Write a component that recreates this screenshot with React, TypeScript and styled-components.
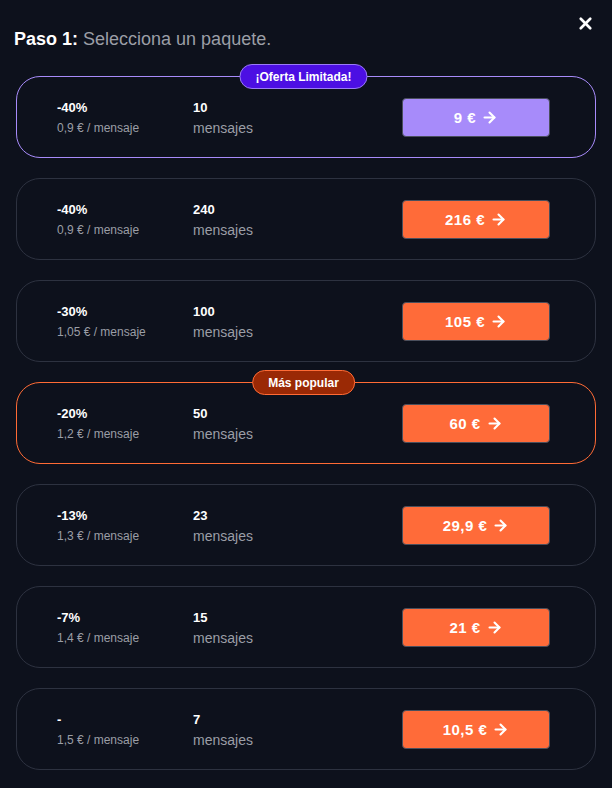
import styled, { createGlobalStyle, css } from 'styled-components'
import { ArrowRight, X } from 'lucide-react'

type Variant = 'default' | 'limited' | 'popular'

interface Pack {
  discount: string
  unit: string
  qty: number
  price: string
  variant: Variant
}

const packs: Pack[] = [
  { discount: '-40%', unit: '0,9 € / mensaje', qty: 10, price: '9 €', variant: 'limited' },
  { discount: '-40%', unit: '0,9 € / mensaje', qty: 240, price: '216 €', variant: 'default' },
  { discount: '-30%', unit: '1,05 € / mensaje', qty: 100, price: '105 €', variant: 'default' },
  { discount: '-20%', unit: '1,2 € / mensaje', qty: 50, price: '60 €', variant: 'popular' },
  { discount: '-13%', unit: '1,3 € / mensaje', qty: 23, price: '29,9 €', variant: 'default' },
  { discount: '-7%', unit: '1,4 € / mensaje', qty: 15, price: '21 €', variant: 'default' },
  { discount: '-', unit: '1,5 € / mensaje', qty: 7, price: '10,5 €', variant: 'default' },
]

const badges: Record<Variant, string | null> = {
  default: null,
  limited: '¡Oferta Limitada!',
  popular: 'Más popular',
}

const App = () => {
  return (
    <>
      <GlobalStyle />
      <Modal>
        <Close aria-label="Cerrar">
          <X size={19} strokeWidth={3.4} />
        </Close>
        <Title>
          <strong>Paso 1:</strong> Selecciona un paquete.
        </Title>
        <List>
          {packs.map((pack, i) => (
            <Card key={i} $variant={pack.variant}>
              {badges[pack.variant] && <Badge $variant={pack.variant}>{badges[pack.variant]}</Badge>}
              <Info>
                <Discount>{pack.discount}</Discount>
                <Unit>{pack.unit}</Unit>
              </Info>
              <Qty>
                <QtyNumber>{pack.qty}</QtyNumber>
                <QtyLabel>mensajes</QtyLabel>
              </Qty>
              <BuyButton $variant={pack.variant}>
                {pack.price}
                <ArrowRight size={17} strokeWidth={3} />
              </BuyButton>
            </Card>
          ))}
        </List>
      </Modal>
    </>
  )
}

export default App

const GlobalStyle = createGlobalStyle`
  body {
    margin: 0;
    background-color: #0d111c;
    font-family: 'Liberation Sans', Arial, sans-serif;
    color: #ffffff;
  }
`

const Modal = styled.div`
  position: relative;
  box-sizing: border-box;
  width: 612px;
  min-height: 788px;
  padding: 29px 16px 20px;
`

const Close = styled.button`
  position: absolute;
  top: 14px;
  right: 17px;
  display: flex;
  padding: 0;
  border: none;
  background: none;
  color: #ffffff;
  cursor: pointer;
`

const Title = styled.h2`
  margin: 0 0 0 -2px;
  font-size: 18px;
  font-weight: 400;
  line-height: 21px;
  color: #9b9ea6;

  strong {
    font-weight: 700;
    color: #ffffff;
  }
`

const List = styled.div`
  display: flex;
  flex-direction: column;
  gap: 20px;
  margin-top: 26px;
`

const cardBorders: Record<Variant, string> = {
  default: '#2d3240',
  limited: '#a78bfa',
  popular: '#ff6b35',
}

const Card = styled.div<{ $variant: Variant }>`
  position: relative;
  display: flex;
  align-items: center;
  box-sizing: border-box;
  height: 82px;
  padding: 0 45px 0 40px;
  border: 1px solid ${(p) => cardBorders[p.$variant]};
  border-radius: 24px;
`

const Badge = styled.span<{ $variant: Variant }>`
  position: absolute;
  top: -13px;
  left: 50%;
  transform: translateX(calc(-50% - 2.5px));
  display: flex;
  align-items: center;
  box-sizing: border-box;
  height: 25px;
  padding: 0 15px;
  border-radius: 999px;
  font-size: 12px;
  font-weight: 700;
  white-space: nowrap;
  ${(p) =>
    p.$variant === 'limited'
      ? css`
          background-color: #4c0fe3;
          border: 1px solid #9b7bf7;
        `
      : css`
          background-color: #9a2905;
          border: 1px solid #ff6b35;
        `}
`

const Info = styled.div`
  display: flex;
  flex-direction: column;
  gap: 5px;
  width: 136px;
`

const Discount = styled.div`
  font-size: 13px;
  font-weight: 700;
  line-height: 16px;
`

const Unit = styled.div`
  font-size: 12px;
  line-height: 14px;
  color: #9b9ea6;
`

const Qty = styled.div`
  display: flex;
  flex-direction: column;
  gap: 4px;
  flex: 1;
  margin-top: 3px;
`

const QtyNumber = styled.div`
  font-size: 13px;
  font-weight: 700;
  line-height: 16px;
`

const QtyLabel = styled.div`
  font-size: 14px;
  line-height: 17px;
  color: #9b9ea6;
`

const BuyButton = styled.button<{ $variant: Variant }>`
  display: flex;
  align-items: center;
  justify-content: center;
  gap: 5px;
  width: 148px;
  height: 39px;
  border: 1px solid #4a4f5c;
  border-radius: 4px;
  background-color: ${(p) => (p.$variant === 'limited' ? '#a78bfa' : '#ff6b39')};
  color: #ffffff;
  font-family: inherit;
  font-size: 15px;
  font-weight: 700;
  letter-spacing: 0.5px;
  cursor: pointer;
`
